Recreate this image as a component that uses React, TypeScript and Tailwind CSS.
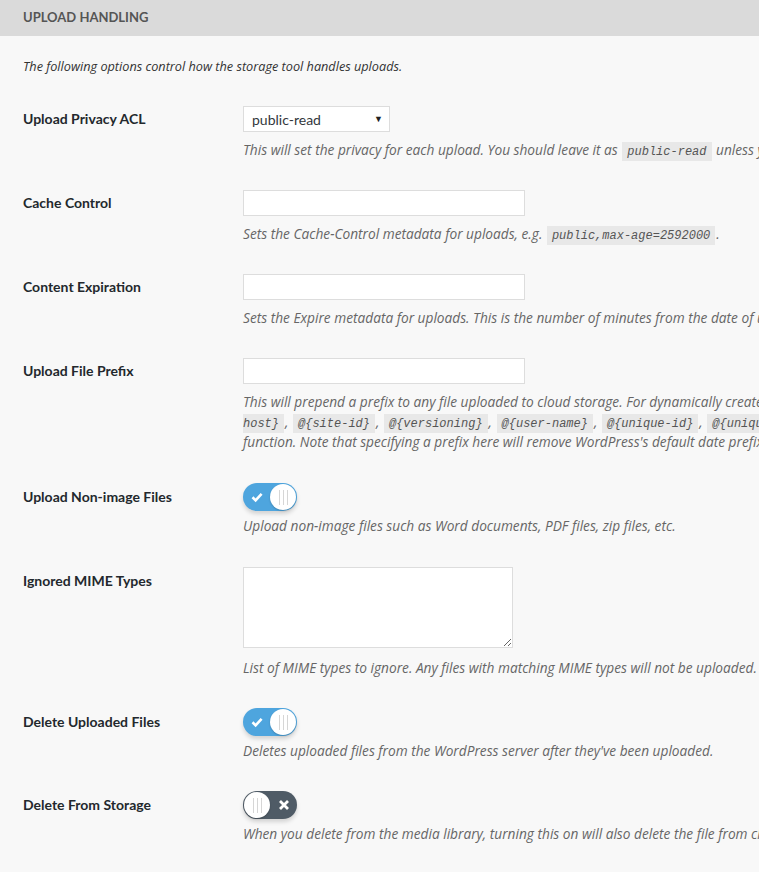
import type { ReactNode } from 'react'

const font = "font-['Lato','Liberation_Sans',sans-serif]"
const descFont = "font-['Open_Sans','Noto_Sans',sans-serif]"

function Code({ children, cls = 'mx-[1px] px-[5px]' }: { children: ReactNode; cls?: string }) {
  return (
    <code className={`${cls} bg-[#e8e8e8] pt-[3px] pb-[2px] font-['Liberation_Mono',monospace] text-[12px] leading-none text-[#555]`}>
      {children}
    </code>
  )
}

function Desc({ children, mt = 'mt-[8px]' }: { children: ReactNode; mt?: string }) {
  return <p className={`${mt} whitespace-nowrap text-[13.7px] italic leading-[20px] text-[#666] ${descFont}`}>{children}</p>
}

function Knob() {
  return (
    <div className="flex h-[26px] w-[26px] items-center justify-center gap-[3px] rounded-full bg-white shadow-[0_1px_2px_rgba(0,0,0,0.2)]">
      <span className="h-[15px] w-[1px] bg-[#d6d6d6]" />
      <span className="h-[15px] w-[1px] bg-[#d6d6d6]" />
      <span className="h-[15px] w-[1px] bg-[#d6d6d6]" />
    </div>
  )
}

function Toggle({ on }: { on: boolean }) {
  return on ? (
    <div className="flex h-[28px] w-[54px] items-center rounded-full bg-[#4ea5de] shadow-[0_3px_4px_rgba(0,0,0,0.15)]">
      <svg viewBox="0 0 12 12" className="ml-[8px] h-[12px] w-[12px]">
        <path d="M1.5 6.3 L4.6 9.3 L10.6 2.8" fill="none" stroke="white" strokeWidth="2.6" />
      </svg>
      <div className="ml-auto mr-[1px]">
        <Knob />
      </div>
    </div>
  ) : (
    <div className="flex h-[28px] w-[54px] items-center rounded-full bg-[#4f5b66] shadow-[0_3px_4px_rgba(0,0,0,0.15)]">
      <div className="ml-[1px]">
        <Knob />
      </div>
      <svg viewBox="0 0 12 12" className="ml-[8px] h-[12px] w-[12px]">
        <path d="M2 2 L10 10 M10 2 L2 10" fill="none" stroke="white" strokeWidth="2.8" />
      </svg>
    </div>
  )
}

function Row({ label, children, pb }: { label: string; children: ReactNode; pb: string }) {
  return (
    <div className={`flex pt-[15px] ${pb}`}>
      <div className="w-[243px] shrink-0 pl-[23px] pt-[5px] text-[14px] font-bold leading-[18px] text-[#23282d]">{label}</div>
      <div className="min-w-0">{children}</div>
    </div>
  )
}

function TextInput() {
  return <div className="mt-[1px] h-[26px] w-[282px] border border-[#ddd] bg-white" />
}

export default function App() {
  return (
    <div className={`h-[872px] w-[759px] overflow-hidden bg-[#f8f8f8] ${font}`}>
      {/* section header */}
      <div className="flex h-[36px] items-center bg-[#dadada] pl-[23px] text-[13px] font-bold text-[#555]">
        UPLOAD HANDLING
      </div>

      <p className={`pl-[23px] pt-[21px] pb-[15px] text-[12.7px] italic leading-[18px] text-[#333] ${descFont}`}>
        The following options control how the storage tool handles uploads.
      </p>

      <Row label="Upload Privacy ACL" pb="pb-[14px]">
        <div className="mt-[1px] flex h-[26px] w-[147px] items-center justify-between border border-[#ddd] bg-white pl-[8px] pr-[6px] text-[14px] text-[#32373c]">
          <span>public-read</span>
          <span className="text-[9px] text-[#222]">▼</span>
        </div>
        <Desc>
          This will set the privacy for each upload. You should leave it as <Code>public-read</Code> unless you are using signed URLs.
        </Desc>
      </Row>

      <Row label="Cache Control" pb="pb-[14px]">
        <TextInput />
        <Desc>
          Sets the Cache-Control metadata for uploads, e.g. <Code>public,max-age=2592000</Code>.
        </Desc>
      </Row>

      <Row label="Content Expiration" pb="pb-[14px]">
        <TextInput />
        <Desc>Sets the Expire metadata for uploads. This is the number of minutes from the date of upload.</Desc>
      </Row>

      <Row label="Upload File Prefix" pb="pb-[16px]">
        <TextInput />
        <div className={`mt-[8px] whitespace-nowrap text-[13.7px] italic leading-[20px] text-[#666] ${descFont}`}>
          <div>
            This will prepend a prefix to any file uploaded to cloud storage. For dynamically created prefixes, you can use{' '}
            <Code cls="ml-[1px] pl-[5px]">@{'{'}site-</Code>
          </div>
          <div>
            <Code cls="mr-[1px] pr-[5px]">host{'}'}</Code>, <Code>@{'{'}site-id{'}'}</Code>, <Code>@{'{'}versioning{'}'}</Code>,{' '}
            <Code>@{'{'}user-name{'}'}</Code>, <Code>@{'{'}unique-id{'}'}</Code>, <Code>@{'{'}unique-path{'}'}</Code>
          </div>
          <div>function. Note that specifying a prefix here will remove WordPress's default date prefix.</div>
        </div>
      </Row>

      <Row label="Upload Non-image Files" pb="pb-[16px]">
        <Toggle on />
        <Desc mt="mt-[5px]">Upload non-image files such as Word documents, PDF files, zip files, etc.</Desc>
      </Row>

      <Row label="Ignored MIME Types" pb="pb-[15px]">
        <textarea className="block h-[81px] w-[270px] resize border border-[#ddd] bg-white" />
        <Desc mt="mt-[10px]">List of MIME types to ignore. Any files with matching MIME types will not be uploaded.</Desc>
      </Row>

      <Row label="Delete Uploaded Files" pb="pb-[15px]">
        <Toggle on />
        <Desc mt="mt-[5px]">Deletes uploaded files from the WordPress server after they've been uploaded.</Desc>
      </Row>

      <Row label="Delete From Storage" pb="pb-[16px]">
        <Toggle on={false} />
        <Desc mt="mt-[5px]">When you delete from the media library, turning this on will also delete the file from cloud storage.</Desc>
      </Row>
    </div>
  )
}
